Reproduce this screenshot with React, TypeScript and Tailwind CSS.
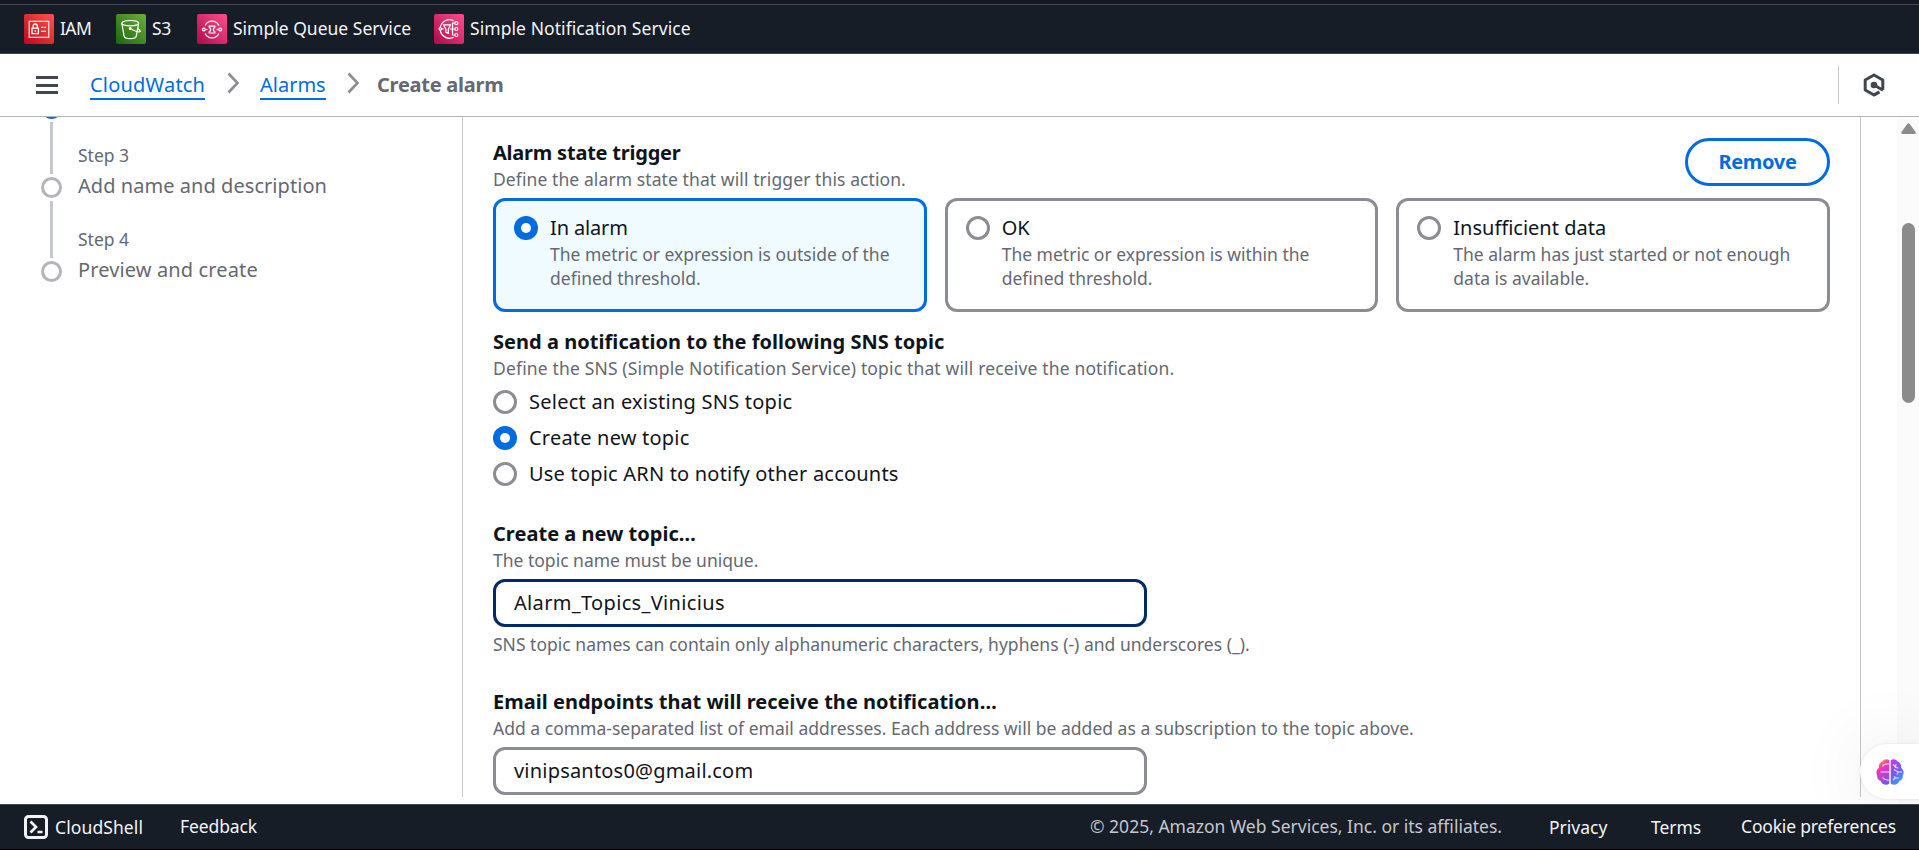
import type { ReactNode } from "react";

function IamIcon() {
  return (
    <svg width="30" height="30" viewBox="0 0 30 30" fill="none" stroke="#fff" strokeWidth="1.1" className="shrink-0">
      <defs>
        <linearGradient id="iam" x1="0" y1="1" x2="1" y2="0">
          <stop offset="0" stopColor="#bd0816" />
          <stop offset="1" stopColor="#ff5252" />
        </linearGradient>
      </defs>
      <rect width="30" height="30" rx="2" fill="url(#iam)" stroke="none" />
      <rect x="5.2" y="7.3" width="19.6" height="16" />
      <rect x="8" y="14.2" width="6.4" height="5.4" strokeWidth="1.3" />
      <path d="M9.2 14V12a2 2 0 0 1 4 0v2" strokeWidth="1.3" />
      <path d="M11.2 16v2M17 13.4h2.4M20.2 13.4h1.8M17 17.4h5" />
    </svg>
  );
}

function S3Icon() {
  return (
    <svg width="30" height="30" viewBox="0 0 30 30" fill="none" stroke="#fff" strokeWidth="1.2" className="shrink-0">
      <defs>
        <linearGradient id="s3" x1="0" y1="1" x2="1" y2="0">
          <stop offset="0" stopColor="#1b660f" />
          <stop offset="1" stopColor="#6cae3e" />
        </linearGradient>
      </defs>
      <rect width="30" height="30" rx="2" fill="url(#s3)" stroke="none" />
      <ellipse cx="14.2" cy="9.2" rx="8.4" ry="2.7" />
      <path d="M5.8 9.4L8.2 22.4c.3 1.6 2.8 2.3 6 2.3s5.7-.7 6-2.3L22.6 9.4" />
      <path d="M14.5 14.5c4 2.4 8.4 3.9 9.6 3.1.6-.5-.6-1.7-2.6-3" />
      <circle cx="14.2" cy="14.5" r="0.9" fill="#fff" />
    </svg>
  );
}

function SqsIcon() {
  return (
    <svg width="30" height="30" viewBox="0 0 30 30" fill="none" stroke="#fff" strokeWidth="1.2" className="shrink-0">
      <defs>
        <linearGradient id="sqs" x1="0" y1="1" x2="1" y2="0">
          <stop offset="0" stopColor="#b0084d" />
          <stop offset="1" stopColor="#ff4f8b" />
        </linearGradient>
      </defs>
      <rect width="30" height="30" rx="2" fill="url(#sqs)" stroke="none" />
      <path d="M8.1 11.5a7.6 7.6 0 0 1 13.8 0M8.1 19.5a7.6 7.6 0 0 0 13.8 0" />
      <circle cx="6.8" cy="15.5" r="1.4" />
      <circle cx="23.2" cy="15.5" r="1.4" />
      <path d="M8.5 15.5h2M19.5 15.5h2" strokeWidth="1" />
      <path d="M12.2 12.2h5.6v1.2l-1.3 1v2.4l1.3 1v1.2h-5.6v-1.2l1.3-1v-2.4l-1.3-1z" />
    </svg>
  );
}

function SnsIcon() {
  return (
    <svg width="30" height="30" viewBox="0 0 30 30" fill="none" stroke="#fff" strokeWidth="1.2" className="shrink-0">
      <defs>
        <linearGradient id="sns" x1="0" y1="1" x2="1" y2="0">
          <stop offset="0" stopColor="#b0084d" />
          <stop offset="1" stopColor="#ff4f8b" />
        </linearGradient>
      </defs>
      <rect width="30" height="30" rx="2" fill="url(#sns)" stroke="none" />
      <path d="M19.6 6.7A9.3 9.3 0 0 0 6.3 13.6M6.3 16.2A9.3 9.3 0 0 0 19.6 23.3" />
      <circle cx="6.3" cy="14.9" r="1.2" />
      <path d="M7.5 14.9h2.2" />
      <path d="M9.5 10.8h7l-2.2 4.4v4.2l-2.400-1v-3.200z" />
      <path d="M16 15h4.500M18.500 15V9.200h2.200M18.500 15v6h2.200" />
      <circle cx="22.3" cy="9.2" r="1.5" />
      <circle cx="22.3" cy="15" r="1.5" />
      <circle cx="22.3" cy="21" r="1.5" />
    </svg>
  );
}

function Chevron() {
  return (
    <svg width="13" height="22" viewBox="0 0 13 22" fill="none" stroke="#8c8c94" strokeWidth="2.6" className="shrink-0">
      <path d="M1.5 1.5L10.5 11L1.5 20.5" />
    </svg>
  );
}

function BrainIcon() {
  return (
    <svg width="28" height="26" viewBox="0 0 28 26" fill="none" className="shrink-0">
      <defs>
        <linearGradient id="brainLeft" x1="0.3" y1="0" x2="0.7" y2="1">
          <stop offset="0" stopColor="#f59a2c" />
          <stop offset="0.35" stopColor="#f035b8" />
          <stop offset="1" stopColor="#7a52f4" />
        </linearGradient>
        <linearGradient id="brainRight" x1="0.2" y1="0" x2="0.7" y2="1">
          <stop offset="0" stopColor="#c63fe0" />
          <stop offset="0.5" stopColor="#6f5cf5" />
          <stop offset="1" stopColor="#2fa8fb" />
        </linearGradient>
      </defs>
      <path d="M13.3 1.3C11-.6 7.200.2 6.300 2.800 3.700 3.600 2.300 6.200 3 8.700.4 10.400-.4 14 1.200 16.300c-.3 3 1.100 5 3.500 5.800.9 3.300 5.600 5 8.600 2.500z" fill="url(#brainLeft)" />
      <path d="M14.7 1.3C17-.6 20.800.2 21.700 2.800c2.600.8 4 3.400 3.300 5.900 2.600 1.700 3.400 5.300 1.800 7.600.3 3-1.100 5-3.500 5.800-.9 3.300-5.600 5-8.600 2.500z" fill="url(#brainRight)" />
      <path d="M6.5 7.5c1-2 3-2.800 6.500-2.500M4.500 13h9M6.500 18.500c1.500 2 3.500 2.700 6.500 2.500" stroke="#fff" strokeOpacity="0.8" strokeWidth="1.2" />
      <path d="M17 5.500l3 3M20 5l-.5 3.500 3 .5M18 10.500l4 2.500h4M22 13l-1 2.500M17 21l2.500-2.200 3.500.2M19.500 18.800l-1.500-1.500" stroke="#fff" strokeOpacity="0.8" strokeWidth="1.1" />
    </svg>
  );
}

function Radio({ checked = false }: { checked?: boolean }) {
  return checked ? (
    <span className="flex size-6 shrink-0 items-center justify-center rounded-full bg-[#006ce0]">
      <span className="size-[10px] rounded-full bg-white" />
    </span>
  ) : (
    <span className="block size-6 shrink-0 rounded-full border-[3px] border-[#8c8c94] bg-white" />
  );
}

function Tile({ title, lines, checked = false, titleClass = "tracking-normal" }: { title: string; lines: string[]; checked?: boolean; titleClass?: string }) {
  return (
    <div
      className={
        checked
          ? "flex h-[114px] gap-3 rounded-xl border-[3px] border-[#006ce0] bg-[#f0fbff] px-[18px] pt-3"
          : "flex h-[114px] gap-3 rounded-xl border-[3px] border-[#8c8c94] bg-white px-[18px] pt-3"
      }
    >
      <div className="pt-[3px]">
        <Radio checked={checked} />
      </div>
      <div className="whitespace-nowrap">
        <div className={`h-[29px] text-[20px] leading-[30px] ${titleClass}`}>{title}</div>
        {lines.map((l) => (
          <div key={l} className="text-[17.5px] leading-6 text-[#656871]">
            {l}
          </div>
        ))}
      </div>
    </div>
  );
}

function Label({
  title,
  hint,
  titleClass = "tracking-normal",
  hintClass = "tracking-normal",
}: {
  title: string;
  hint: string;
  titleClass?: string;
  hintClass?: string;
}) {
  return (
    <div className="whitespace-nowrap">
      <div className={`text-[20px] leading-[30px] font-bold ${titleClass}`}>{title}</div>
      <div className={`h-6 text-[17.5px] leading-[22px] text-[#656871] ${hintClass}`}>{hint}</div>
    </div>
  );
}

function RadioRow({ checked, className, children }: { checked?: boolean; className: string; children: ReactNode }) {
  return (
    <div className="flex h-[30px] items-center gap-3">
      <Radio checked={checked} />
      <span className={`text-[20px] leading-[30px] ${className}`}>{children}</span>
    </div>
  );
}

function Favorite({ icon, children }: { icon: ReactNode; children: ReactNode }) {
  return (
    <div className="flex items-center gap-[6px]">
      {icon}
      {children}
    </div>
  );
}

export default function App() {
  return (
    <div className="flex h-[850px] w-[1919px] flex-col overflow-hidden bg-white font-['Noto_Sans',sans-serif] text-[#0f141a]">
      <div className="h-[5px] shrink-0 border-b border-[#424650] bg-[#161924]" />
      <nav className="flex h-[49px] shrink-0 items-center gap-[25px] whitespace-nowrap border-b border-[#424650] bg-[#161d26] pl-6 text-[17.5px] leading-6 text-[#f3f3f7]">
        <Favorite icon={<IamIcon />}>
          <span className="w-[31px] pb-[2px] tracking-[-0.6px]">IAM</span>
        </Favorite>
        <Favorite icon={<S3Icon />}>
          <span className="w-5 pb-[2px] tracking-[-0.3px]">S3</span>
        </Favorite>
        <Favorite icon={<SqsIcon />}>
          <span className="w-[176px] pb-[2px]">Simple Queue Service</span>
        </Favorite>
        <Favorite icon={<SnsIcon />}>
          <span className="pb-[2px] tracking-[0.07px]">Simple Notification Service</span>
        </Favorite>
      </nav>

      <header className="flex h-[63px] shrink-0 items-center whitespace-nowrap border-b border-[#b4b4bb] pl-9 pr-[34px]">
        <div className="flex w-[22px] flex-col gap-[4.5px]">
          <span className="h-[3px] bg-[#424650]" />
          <span className="h-[3px] bg-[#424650]" />
          <span className="h-[3px] bg-[#424650]" />
        </div>
        <div className="ml-8 flex items-center text-[20px] leading-[30px]">
          <a className="h-[30px] w-[115px] border-b-2 border-[#006ce0] tracking-[0.2px] text-[#006ce0]">CloudWatch</a>
          <span className="ml-[22px] -mt-1">
            <Chevron />
          </span>
          <a className="ml-[20px] h-[30px] w-[66px] border-b-2 border-[#006ce0] text-[#006ce0]">Alarms</a>
          <span className="ml-[21px] -mt-1">
            <Chevron />
          </span>
          <span className="ml-[17px] font-bold tracking-[-0.25px] text-[#656871]">Create alarm</span>
        </div>
        <div className="ml-auto flex items-center">
          <span className="h-[38px] w-px bg-[#c6c6cd]" />
          <svg width="22" height="24" viewBox="0 0 22 24" fill="none" stroke="#424650" strokeWidth="3" className="ml-6">
            <path d="M19.8 16.7V7L11 2L2.200 7v10L11 22l4.800-2.700" strokeLinejoin="round" />
            <path d="M11 12l9 5.300" />
            <path d="M11 22l5.500-3.100" />
            <circle cx="11" cy="12" r="3.3" fill="#424650" stroke="none" />
          </svg>
        </div>
      </header>

      <div className="flex min-h-0 flex-1">
        <aside className="flex w-[462px] shrink-0 gap-4 pl-[41px]">
          <div className="flex w-[21px] flex-col items-center gap-[3px]">
            <div className="flex h-[2px] items-end overflow-hidden">
              <span className="size-[21px] shrink-0 rounded-full bg-[#006ce0]" />
            </div>
            <span className="h-[52px] w-[3px] bg-[#c6c6cd]" />
            <span className="size-[21px] rounded-full border-[3px] border-[#b4b4bb]" />
            <span className="h-[57px] w-[3px] bg-[#c6c6cd]" />
            <span className="size-[21px] rounded-full border-[3px] border-[#b4b4bb]" />
          </div>
          <div className="flex flex-col gap-[26px] whitespace-nowrap pt-[26px] text-[#656871]">
            <div>
              <div className="text-[17.5px] leading-6">Step 3</div>
              <div className="mt-1 text-[20px] leading-[30px] tracking-[0.05px]">Add name and description</div>
            </div>
            <div>
              <div className="text-[17.5px] leading-6">Step 4</div>
              <div className="mt-1 text-[20px] leading-[30px] tracking-[0.13px]">Preview and create</div>
            </div>
          </div>
        </aside>

        <main className="mb-[7px] w-[1399px] shrink-0 overflow-hidden border-x border-[#c6c6cd] px-[30px] pt-[21px]">
          <section>
            <div className="flex h-[60px] items-start justify-between">
              <Label
                title="Alarm state trigger"
                titleClass="tracking-[-0.22px]"
                hint="Define the alarm state that will trigger this action."
                hintClass="tracking-[0.09px]"
              />
              <button className="h-12 w-[145px] rounded-full border-[3px] border-[#006ce0] text-[20px] font-bold tracking-[-0.32px] text-[#006ce0]">
                Remove
              </button>
            </div>
            <div className="grid grid-cols-3 gap-[18px]">
              <Tile
                checked
                title="In alarm"
                titleClass="tracking-[-0.15px]"
                lines={["The metric or expression is outside of the", "defined threshold."]}
              />
              <Tile title="OK" lines={["The metric or expression is within the", "defined threshold."]} />
              <Tile title="Insufficient data" lines={["The alarm has just started or not enough", "data is available."]} />
            </div>
          </section>

          <section className="mt-[15px]">
            <Label
              title="Send a notification to the following SNS topic"
              titleClass="tracking-[0.04px]"
              hint="Define the SNS (Simple Notification Service) topic that will receive the notification."
              hintClass="tracking-[0.155px]"
            />
            <div className="mt-[6px] flex flex-col gap-[6px]">
              <RadioRow className="tracking-[0.24px]">Select an existing SNS topic</RadioRow>
              <RadioRow checked className="tracking-[0.2px]">
                Create new topic
              </RadioRow>
              <RadioRow className="tracking-[0.2px]">Use topic ARN to notify other accounts</RadioRow>
            </div>
          </section>

          <section className="mt-[30px] whitespace-nowrap">
            <Label title="Create a new topic…" titleClass="tracking-[0.03px]" hint="The topic name must be unique." />
            <div className="mt-[6px] h-12 w-[654px] rounded-xl border-[3px] border-[#002b66] px-[18px] text-[20px] leading-[42px] tracking-[0.34px]">
              Alarm_Topics_Vinicius
            </div>
            <div className="mt-[6px] h-6 text-[17.5px] leading-[22px] tracking-[0.015px] text-[#656871]">
              SNS topic names can contain only alphanumeric characters, hyphens (-) and underscores (_).
            </div>
          </section>

          <section className="mt-[30px] whitespace-nowrap">
            <Label
              title="Email endpoints that will receive the notification…"
              titleClass="tracking-[0.02px]"
              hint="Add a comma-separated list of email addresses. Each address will be added as a subscription to the topic above."
              hintClass="tracking-[0.015px]"
            />
            <div className="mt-[6px] h-12 w-[654px] rounded-xl border-[3px] border-[#8c8c94] px-[18px] text-[20px] leading-[42px] tracking-[0.2px]">
              vinipsantos0@gmail.com
            </div>
          </section>
        </main>

        <div className="ml-auto flex w-[22px] flex-col items-center bg-[#fbfbfb] pl-[1px] pt-[6px]">
          <svg width="15" height="11" viewBox="0 0 15 11" fill="#8b8b8b">
            <path d="M6.2 1Q7.5-.6 8.800 1L14.500 9Q15.300 11 13.300 11H1.700Q-.3 11 .5 9z" />
          </svg>
          <div className="mt-[89px] h-[180px] w-[13px] rounded-full bg-[#8b8b8b]" />
        </div>
      </div>

      <div className="absolute left-[1860px] top-[744px] h-[55px] w-[59px]">
        <div className="flex h-full w-full items-center rounded-l-full bg-white pl-4 shadow-[0_0_70px_rgba(0,0,0,0.1),0_0_3px_rgba(0,0,0,0.1)]">
          <BrainIcon />
        </div>
      </div>

      <footer className="relative flex h-[46px] shrink-0 items-center whitespace-nowrap border-b border-t border-b-black border-t-[#424650] bg-[#161d26] pl-6 pr-[22px] text-[17.5px] leading-6 text-[#f3f3f7]">
        <svg width="24" height="24" viewBox="0 0 24 24" fill="none" stroke="#f3f3f7" strokeWidth="3" className="shrink-0">
          <rect x="1.5" y="1.5" width="21" height="21" rx="3" />
          <path d="M6.5 6.5L12 12l-5.500 5.500M13.500 17h5" strokeWidth="2.7" />
        </svg>
        <span className="ml-[7px] w-[88px] tracking-[0.1px]">CloudShell</span>
        <span className="ml-[37px] pb-[2px] tracking-[-0.1px]">Feedback</span>
        <span className="ml-auto w-[412px] pb-[2px] text-[#c6c6cd]">© 2025, Amazon Web Services, Inc. or its affiliates.</span>
        <span className="ml-[47px] w-[59px]">Privacy</span>
        <span className="ml-[43px] w-[50px] tracking-[-0.07px]">Terms</span>
        <span className="ml-10 w-[156px] pb-[2px] tracking-[-0.18px]">Cookie preferences</span>
      </footer>
    </div>
  );
}
